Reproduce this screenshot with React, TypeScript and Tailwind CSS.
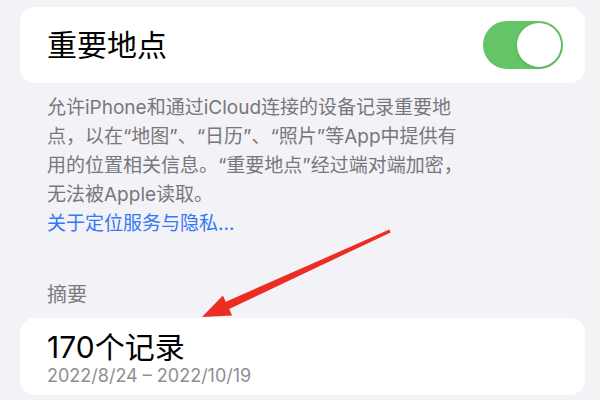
export default function App() {
  const font = { fontFamily: 'Inter, "Noto Sans CJK SC", sans-serif' };
  return (
    <div
      className="relative w-[600px] h-[400px] overflow-hidden bg-[#f2f2f7]"
      style={font}
    >
      <div className="ml-[20px] mr-[15px] pt-[7px]">
        <div className="flex h-[76px] items-center justify-between rounded-[15px] bg-white pl-[27px] pr-[22px]">
          <span className="text-[30px] leading-none text-black">重要地点</span>
          <div className="relative h-[48px] w-[80px] rounded-full bg-[#65c466]">
            <div className="absolute right-[2px] top-[2px] h-[44px] w-[44px] rounded-full bg-white shadow-[0_1px_3px_rgba(0,0,0,0.15)]" />
          </div>
        </div>
      </div>

      <div className="mt-[10px] px-[47px] text-[19px] leading-[29px] text-[#77777c]">
        <div>允许iPhone和通过iCloud连接的设备记录重要地</div>
        <div>点，以在“地图”、“日历”、“照片”等App中提供有</div>
        <div>用的位置相关信息。“重要地点”经过端对端加密，</div>
        <div>无法被Apple读取。</div>
        <div className="text-[#3478f6]">关于定位服务与隐私...</div>
      </div>

      <div className="mt-[43px] px-[47px] text-[20px] leading-[29px] text-[#7b7b80]">
        摘要
      </div>

      <div className="ml-[20px] mr-[15px] mt-[8px]">
        <div className="h-[77px] rounded-[15px] bg-white pl-[27px] pt-[13px]">
          <div className="text-[30px] leading-[32px] text-black">170个记录</div>
          <div className="mt-[2px] text-[18px] leading-[22px] text-[#8e8e93]">
            2022/8/24 – 2022/10/19
          </div>
        </div>
      </div>

      <svg
        className="pointer-events-none absolute left-0 top-0"
        width="600"
        height="400"
        viewBox="0 0 600 400"
      >
        <polygon
          points="390.6,232.4 229.2,309 232.1,315.4 202,317 222.9,295.4 225.8,301.8 389.4,229.6"
          fill="#ec2d24"
        />
      </svg>
    </div>
  );
}
